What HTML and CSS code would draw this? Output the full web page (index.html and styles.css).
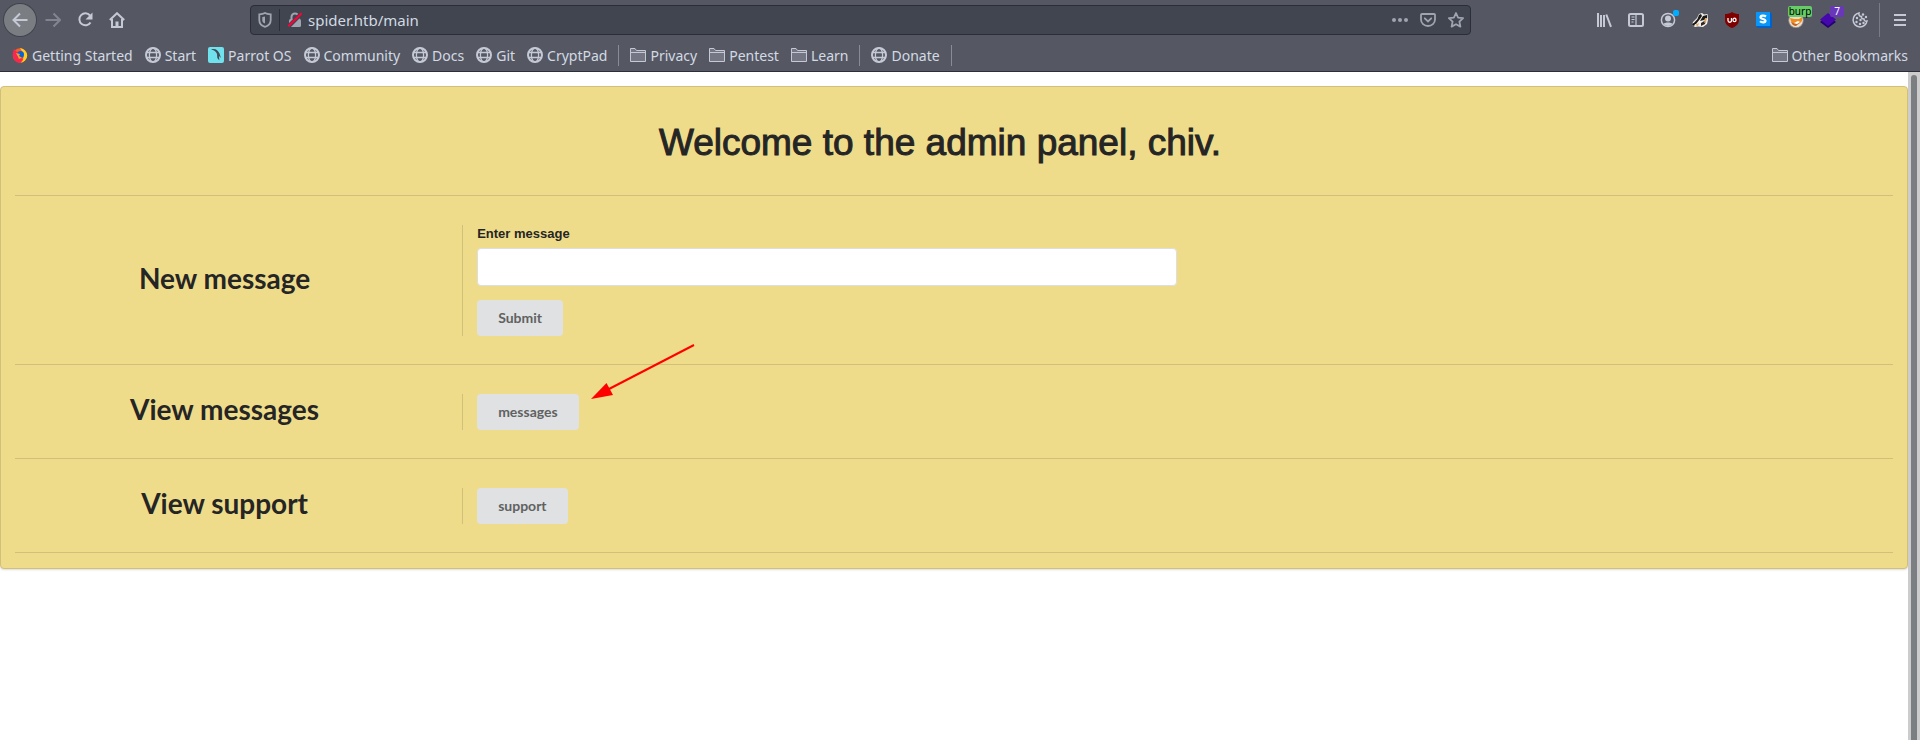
FILE: index.html
```html
<!DOCTYPE html>
<html lang="en">
<head>
<meta charset="utf-8">
<title>spider.htb/main</title>
<link rel="stylesheet" href="styles.css">
</head>
<body>
<svg class="defs" aria-hidden="true">
  <symbol id="globe" viewBox="0 0 16 16"><g fill="none" stroke="#c5c9d6"><circle cx="8" cy="8" r="7" stroke-width="2"/><ellipse cx="8" cy="8" rx="3.6" ry="7" stroke-width="1.3"/><path d="M1 5.5h14M1 10.5h14" stroke-width="1.3"/></g></symbol>
  <symbol id="folder" viewBox="0 0 16 16"><path d="M.5 14.500V1.500h4.500l1.500 2h9v11z" fill="#747783" stroke="#c5c9d6"/><path d="M.5 5.500h15" stroke="#c5c9d6"/></symbol>
</svg>
<header class="browser">
  <div class="toolbar">
    <nav class="nav">
      <button class="tool back" aria-label="Back"><svg viewBox="0 0 16 16"><path d="M15.500 8H1.500M8 1.500L1.500 8l6.500 6.500" class="line"/></svg></button>
      <button class="tool dim" aria-label="Forward"><svg viewBox="0 0 16 16"><path d="M.5 8h14M8.500 1.500L15 8l-6.500 6.500" class="line"/></svg></button>
      <button class="tool" aria-label="Reload"><svg viewBox="0 0 16 16"><path d="M13 3.500A6 6 0 1 0 13.500 10.500" class="line"/><path d="M15.500.5v7h-7z" class="solid"/></svg></button>
      <button class="tool" aria-label="Home"><svg viewBox="0 0 16 16"><path d="M.8 8L8 1.200 15.200 8M3 7v8h10V7" class="line"/><path d="M6.500 15V9.500h3V15z" class="solid"/></svg></button>
    </nav>
    <div class="urlbar">
      <svg class="url-icon" viewBox="0 0 16 16"><path d="M8 1C6.500 2 4 2.300 2.300 2.300V8c0 3.500 2.700 6 5.700 6.800 3-.8 5.700-3.300 5.700-6.800V2.300C12 2.300 9.500 2 8 1z" fill="none" stroke="#a0a4b0" stroke-width="1.800"/><path d="M8 4.500L5.300 5v3.500C5.300 10 6.500 11 8 11.500z" fill="#a0a4b0"/></svg>
      <span class="url-sep"></span>
      <svg class="url-icon" viewBox="0 0 16 16"><path d="M4.500 8V5a3.500 3.500 0 0 1 7 0v3" fill="none" stroke="#a0a4b0" stroke-width="2"/><rect x="2" y="7" width="12" height="8" rx="1.500" fill="#a0a4b0"/><path d="M1.500 14.500L14.500 1.500" stroke="#404550" stroke-width="4"/><path d="M1.300 14.300L14.700 1.300" stroke="#ff0039" stroke-width="2"/></svg>
      <input class="url" type="text" value="spider.htb/main" aria-label="Address">
      <button class="url-btn" aria-label="Page actions"><svg viewBox="0 0 16 16"><circle cx="2" cy="8" r="2" class="mute"/><circle cx="8" cy="8" r="2" class="mute"/><circle cx="14" cy="8" r="2" class="mute"/></svg></button>
      <button class="url-btn" aria-label="Save to Pocket"><svg viewBox="0 0 16 16"><path d="M2 2h12a1 1 0 0 1 1 1v4.500a7 6.500 0 0 1-14 0V3a1 1 0 0 1 1-1z" class="mute-line"/><path d="M4.800 6.300L8 9.500l3.200-3.200" class="mute-line" stroke-linecap="round"/></svg></button>
      <button class="url-btn" aria-label="Bookmark"><svg viewBox="0 0 16 16"><path d="M8 1l2.100 4.600 5 .6-3.700 3.400 1 5L8 12.200l-4.400 2.400 1-5L.9 6.200l5-.6z" class="mute-line" stroke-linejoin="round"/></svg></button>
    </div>
    <div class="tools">
      <button class="tool" aria-label="Library"><svg viewBox="0 0 16 16"><path d="M2 1v14M5 3v12M8 3v12M10.300 2.500L15 14.800" class="line"/></svg></button>
      <button class="tool" aria-label="Sidebar"><svg viewBox="0 0 16 16"><rect x="1" y="2" width="14" height="12" rx="1.500" class="line"/><path d="M8 2v12M3.500 5h3M3.500 7.500h3M3.500 10h2" stroke="#c5c9d6" stroke-width="1.200"/></svg></button>
      <button class="tool" aria-label="Account"><svg viewBox="0 0 16 16"><circle cx="8" cy="8" r="6.600" class="line thin"/><circle cx="8" cy="6.500" r="3" class="solid"/><path d="M3.500 12c1-2 8-2 9 0A6 6 0 0 1 3.500 12z" class="solid"/></svg><span class="dot"></span></button>
      <button class="tool" aria-label="Privacy Badger"><svg viewBox="0 0 16 16"><path d="M0 13l1-3 4-4 2-4 3-1 2 1.500 3.500-.5.5 6-1 4-4 3-5-.5-3 .5z" fill="#f3f0ea"/><path d="M1 12l4.500-5L7 3l2-1 1 2-2 3-4 5zM11 4l4-1v3l-3 2-4 1z" fill="#1c1a18"/><path d="M9 11l5-3-1 4-4 2z" fill="#30261c"/><path d="M3 13l4-2-1 3zM13 6l2 0-1 4-2 1z" fill="#d9a362"/><circle cx="1.500" cy="12.500" r="1.300" fill="#111"/></svg></button>
      <button class="tool" aria-label="uBlock Origin"><svg viewBox="0 0 16 16"><path d="M8 0c2 1.500 4.500 2 7 2v6c0 4-3 6.500-7 8-4-1.500-7-4-7-8V2c2.500 0 5-.5 7-2z" fill="#800000"/><path d="M4 6v2.500a1.500 1.500 0 0 0 3.500 0V6" fill="none" stroke="#fff" stroke-width="1.300"/><rect x="9" y="6.200" width="3" height="3.500" rx="1.500" fill="none" stroke="#fff" stroke-width="1.300"/></svg></button>
      <button class="tool" aria-label="S extension"><svg viewBox="0 0 16 16"><path d="M0 0h14l2 2v14H2l-2-2z" fill="#0062c9"/><path d="M0 0h14v14H0z" fill="#0996f8"/><path d="M10 4.500C8 3 4.500 3.300 4.500 5.200c0 2.300 5 1.200 5 3.600 0 2-3.800 2-5.500.5" fill="none" stroke="#fff" stroke-width="2.200"/></svg></button>
      <button class="tool" aria-label="FoxyProxy"><svg viewBox="0 0 16 16"><circle cx="8" cy="8.500" r="7.300" fill="#e8dccb" stroke="#8c8580" stroke-width=".8"/><path d="M2 6l4 1h5l3-2 0 4-3 3-4 2-3-2z" fill="#f08b20"/><path d="M3 10l4 2 5-2-4 4-3-1z" fill="#bd642a"/><path d="M6 11l4-2 2 1-3 2z" fill="#fff"/></svg><span class="badge badge-burp">burp</span></button>
      <button class="tool" aria-label="Wappalyzer"><svg viewBox="0 0 16 16"><path d="M8 4l8 6-8 6-8-6z" fill="#250070"/><path d="M8 1l8 6.500L8 14 0 7.500z" fill="#4608ad"/></svg><span class="badge badge-count">7</span></button>
      <button class="tool" aria-label="Cookies"><svg viewBox="0 0 16 16"><path d="M7 1a7 7 0 1 0 8 8c-2 .5-3-.5-3-2-2 0-3-1-2.500-2.500C7.500 4.500 6.500 3 7 1z" class="line thin"/><g class="solid"><circle cx="5" cy="6" r="1.200"/><circle cx="8.500" cy="8" r="1.200"/><circle cx="4.500" cy="10" r="1.200"/><circle cx="8" cy="12" r="1.200"/><circle cx="11.500" cy="11" r="1.200"/><circle cx="11" cy="2.500" r="1.200"/><circle cx="14" cy="5" r="1.200"/></g></svg></button>
      <span class="menu-sep"></span>
      <button class="tool menu" aria-label="Menu"><svg viewBox="0 0 16 16"><path d="M2 3h12M2 8h12M2 13h12" class="line"/></svg></button>
    </div>
  </div>
  <nav class="bookmarks" aria-label="Bookmarks">
    <a href="#"><svg viewBox="0 0 16 16"><circle cx="8" cy="8.500" r="7.200" fill="#ff5b25"/><path d="M8 1c5 1 8 5 7 9-1 3-3 5-6 6 3-3 4-8-1-15z" fill="#ffcf24"/><path d="M1 5l1-3 3 3 3 2-2 3 5 2-3 4C4 16 0 12 1 5z" fill="#fa264d"/><circle cx="8.500" cy="7.500" r="3.500" fill="#0a62d8"/><path d="M4 6l4 1-1 2 3 1.500-3 1.500z" fill="#ff9b1f"/></svg>Getting Started</a>
    <a href="#"><svg><use href="#globe"/></svg>Start</a>
    <a href="#"><svg viewBox="0 0 16 16"><rect width="16" height="16" rx="2" fill="#70e2ee"/><path d="M3 2.500C7 1 10 3 11.500 6.500L13 11l-2-2 .3 4.500-2-2.500-.3-4C8 4.500 6 3 3 2.500z" fill="#414c57"/></svg>Parrot OS</a>
    <a href="#"><svg><use href="#globe"/></svg>Community</a>
    <a href="#"><svg><use href="#globe"/></svg>Docs</a>
    <a href="#"><svg><use href="#globe"/></svg>Git</a>
    <a href="#"><svg><use href="#globe"/></svg>CryptPad</a>
    <span class="sep"></span>
    <a href="#"><svg><use href="#folder"/></svg>Privacy</a>
    <a href="#"><svg><use href="#folder"/></svg>Pentest</a>
    <a href="#"><svg><use href="#folder"/></svg>Learn</a>
    <span class="sep"></span>
    <a href="#"><svg><use href="#globe"/></svg>Donate</a>
    <span class="sep"></span>
    <a href="#" class="other"><svg><use href="#folder"/></svg>Other Bookmarks</a>
  </nav>
</header>
<div class="viewport">
  <main class="page">
    <section class="segment">
      <div class="title-row"><h1>Welcome to the admin panel, chiv.</h1></div>
      <div class="row">
        <h2>New message</h2>
        <form class="cell">
          <label for="message">Enter message</label>
          <input id="message" class="field" type="text">
          <button class="btn" type="button">Submit</button>
        </form>
      </div>
      <div class="row">
        <h2>View messages</h2>
        <div class="cell"><button class="btn" type="button">messages</button>
          <svg class="arrow" viewBox="0 0 104 56" aria-hidden="true"><path d="M103 1L18 45" stroke="#f00" stroke-width="2"/><path d="M0 55l15.500-16 6.500 12z" fill="#f00"/></svg>
        </div>
      </div>
      <div class="row">
        <h2>View support</h2>
        <div class="cell"><button class="btn" type="button">support</button></div>
      </div>
    </section>
  </main>
  <div class="scrollbar"><div class="thumb"></div></div>
</div>
</body>
</html>
```
FILE: styles.css
```css
* { box-sizing: border-box; }
body {
  margin: 0;
  min-height: 100vh;
  display: flex;
  flex-direction: column;
  background: #fff;
  font-family: Lato, "Liberation Sans", sans-serif;
}
button { font: inherit; border: 0; padding: 0; background: none; }
.defs { position: absolute; width: 0; height: 0; }

/* Browser chrome */
.browser {
  background: #555863;
  border-bottom: 1px solid #2b2e39;
  font-family: "Noto Sans", sans-serif;
  color: #d3dae3;
}
.toolbar { display: flex; align-items: center; height: 40px; padding: 0 4px; }
.nav { display: flex; align-items: center; }
.tool {
  position: relative;
  display: flex;
  align-items: center;
  justify-content: center;
  width: 32px;
  height: 32px;
}
.tool svg { width: 16px; height: 16px; }
.back { border-radius: 50%; background: #7a7d81; box-shadow: 0 0 0 1px #41444f; }
.back + .tool { margin-left: 1px; }
.dim { opacity: .4; }
.line { fill: none; stroke: #c5c9d6; stroke-width: 2; }
.thin { stroke-width: 1.5; }
.solid { fill: #c5c9d6; }
.mute { fill: #a0a4b0; }
.mute-line { fill: none; stroke: #a0a4b0; stroke-width: 1.8; }
.urlbar {
  flex: 1;
  display: flex;
  align-items: center;
  height: 30px;
  margin: 0 117px;
  padding: 0 0 0 6px;
  background: #404550;
  border: 1px solid #2b2e39;
  border-radius: 4px;
}
.url-icon { width: 16px; height: 16px; }
.url-sep { width: 1px; height: 22px; margin: 0 7px 0 6px; background: #2b2e39; }
.url {
  flex: 1;
  min-width: 0;
  margin-left: 5px;
  padding: 0;
  border: 0;
  background: none;
  color: #d3dae3;
  font: 15px "Noto Sans", sans-serif;
}
.url-btn { display: flex; align-items: center; justify-content: center; width: 28px; height: 28px; }
.url-btn svg { width: 16px; height: 16px; }
.tools { display: flex; align-items: center; }
.dot { position: absolute; top: 6px; right: 5px; width: 6px; height: 6px; border-radius: 2px; background: #00adff; }
.badge { position: absolute; border-radius: 2px; text-align: center; font-size: 10px; line-height: 11px; height: 11px; }
.badge-burp { top: 2px; left: 8px; width: 24px; background: #66cc66; color: #000; }
.badge-count { top: 2px; left: 18px; width: 14px; background: #6938b8; color: #fff; }
.menu-sep { width: 1px; height: 34px; margin: 0 4px 0 3px; background: #797c87; }
.bookmarks { display: flex; align-items: center; height: 31px; gap: 12px; padding: 0 12px 1px; font-size: 14px; }
.bookmarks a { display: flex; align-items: center; gap: 4px; color: inherit; text-decoration: none; white-space: nowrap; }
.bookmarks svg { width: 16px; height: 16px; }
.sep { width: 1px; height: 21px; margin: 0 -1px; background: #898c96; }
.other { margin-left: auto; }

/* Page */
.viewport { flex: 1; display: flex; }
.page { flex: 1; padding-top: 14px; }
.segment {
  padding: 0 14px 15px;
  background: #efdc8a;
  border: 1px solid #d1c07a;
  border-radius: 4px;
  box-shadow: 0 1px 2px rgba(34, 36, 38, .15);
}
h1, h2 { margin: 0; color: #252525; text-align: center; }
.title-row { padding: 34px 28px 31px 0; }
h1 { font: 500 37px/43px "Liberation Sans", sans-serif; -webkit-text-stroke: 1px #252525; }
.row { display: grid; grid-template-columns: 5fr 16fr; padding: 29px 0 28px; border-top: 1px solid #d1c07a; }
.row:last-child { border-bottom: 1px solid #d1c07a; }
h2 { align-self: center; padding: 0 28px 6px 0; font: 700 28px/30px Lato, sans-serif; }
.cell { position: relative; padding-left: 14px; border-left: 1px solid #d1c07a; }
label { display: block; margin-bottom: 5px; color: #252525; font: 700 13px/18px "Liberation Sans", sans-serif; }
.field {
  display: block;
  width: 100%;
  max-width: 700px;
  height: 38px;
  margin-bottom: 14px;
  padding: 0 14px;
  border: 1px solid #dededf;
  border-radius: 4px;
  background: #fff;
  font-size: 14px;
}
.btn {
  display: block;
  height: 36px;
  padding: 0 21px;
  border-radius: 4px;
  background: #e0e1e2;
  color: #606163;
  font: 700 14px/36px Lato, sans-serif;
}
.arrow { position: absolute; left: 128px; top: -50px; width: 104px; height: 56px; }
.scrollbar { width: 12px; padding: 3px 3px 0; background: #cdcccc; display: flex; }
.thumb { flex: 1; border-radius: 3px 3px 0 0; background: #7c7f82; }
```
